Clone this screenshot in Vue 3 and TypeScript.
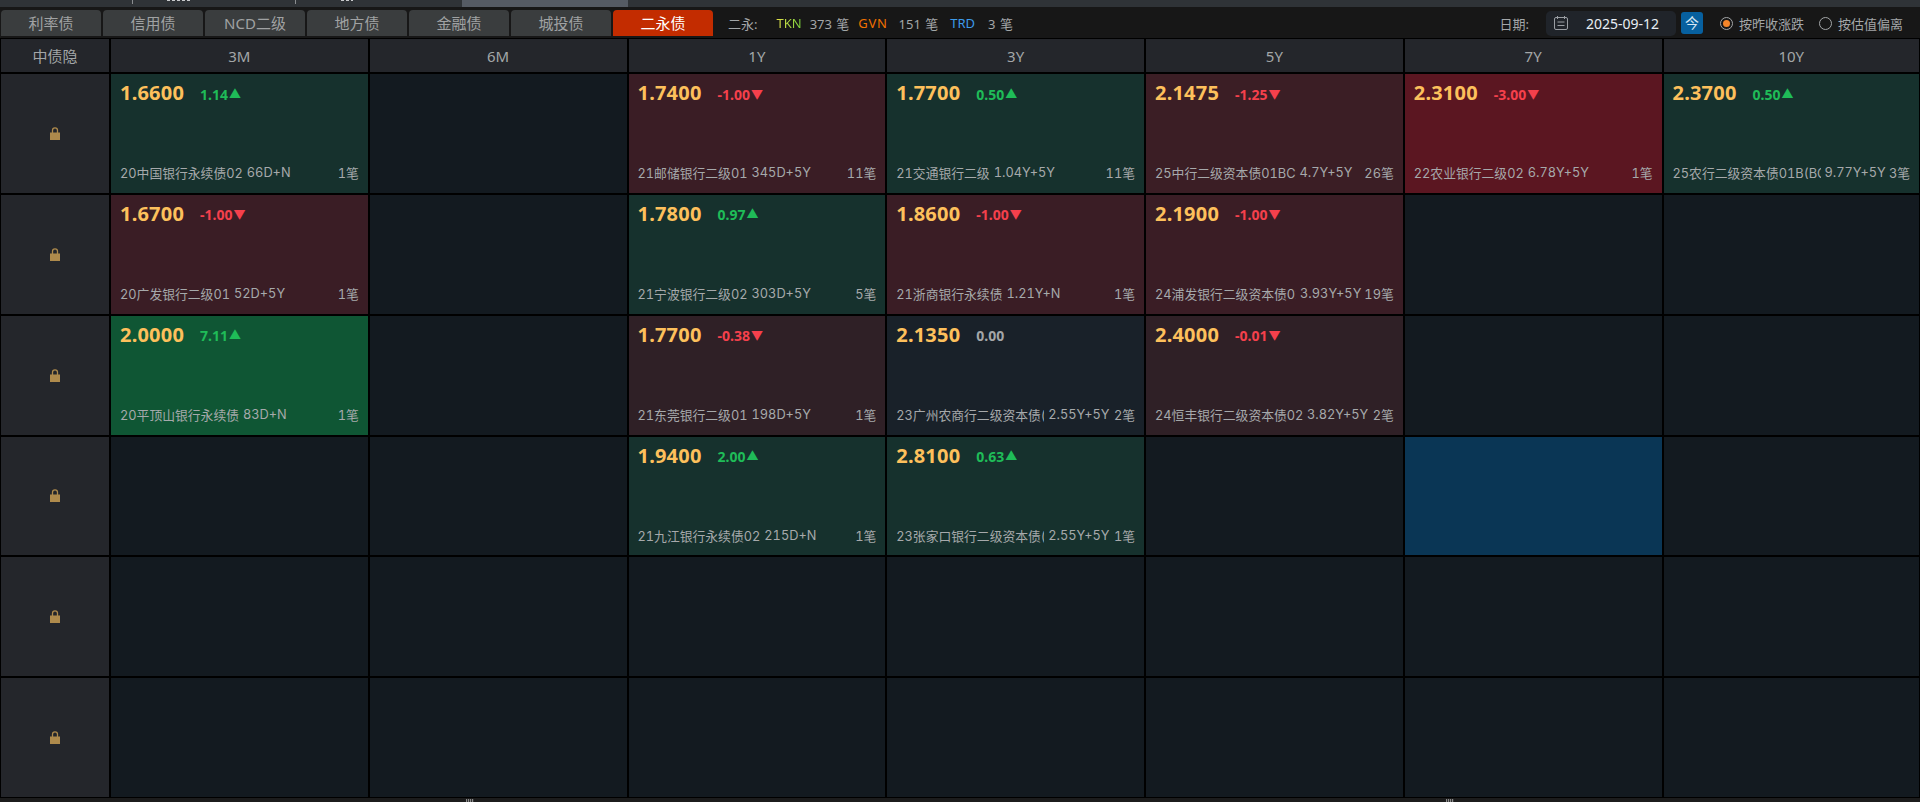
<script setup lang="ts">
type Cell = { v?: string; c?: string; dir?: 'up' | 'down' | 'flat'; name?: string; term?: string; n?: string; tone: string } | null

const tabs = ['利率债', '信用债', 'NCD二级', '地方债', '金融债', '城投债', '二永债']
const cols = ['3M', '6M', '1Y', '3Y', '5Y', '7Y', '10Y']

const e: Cell = null
const rows: Cell[][] = [
  [
    { v: '1.6600', c: '1.14', dir: 'up', name: '20中国银行永续债02', term: '66D+N', n: '1笔', tone: 'green' },
    e,
    { v: '1.7400', c: '-1.00', dir: 'down', name: '21邮储银行二级01', term: '345D+5Y', n: '11笔', tone: 'red' },
    { v: '1.7700', c: '0.50', dir: 'up', name: '21交通银行二级', term: '1.04Y+5Y', n: '11笔', tone: 'green' },
    { v: '2.1475', c: '-1.25', dir: 'down', name: '25中行二级资本债01BC', term: '4.7Y+5Y', n: '26笔', tone: 'red2' },
    { v: '2.3100', c: '-3.00', dir: 'down', name: '22农业银行二级02', term: '6.78Y+5Y', n: '1笔', tone: 'redStrong' },
    { v: '2.3700', c: '0.50', dir: 'up', name: '25农行二级资本债01B(BC)', term: '9.77Y+5Y', n: '3笔', tone: 'green' }
  ],
  [
    { v: '1.6700', c: '-1.00', dir: 'down', name: '20广发银行二级01', term: '52D+5Y', n: '1笔', tone: 'red' },
    e,
    { v: '1.7800', c: '0.97', dir: 'up', name: '21宁波银行二级02', term: '303D+5Y', n: '5笔', tone: 'green' },
    { v: '1.8600', c: '-1.00', dir: 'down', name: '21浙商银行永续债', term: '1.21Y+N', n: '1笔', tone: 'red' },
    { v: '2.1900', c: '-1.00', dir: 'down', name: '24浦发银行二级资本债02', term: '3.93Y+5Y', n: '19笔', tone: 'red' },
    e,
    e
  ],
  [
    { v: '2.0000', c: '7.11', dir: 'up', name: '20平顶山银行永续债', term: '83D+N', n: '1笔', tone: 'greenStrong' },
    e,
    { v: '1.7700', c: '-0.38', dir: 'down', name: '21东莞银行二级01', term: '198D+5Y', n: '1笔', tone: 'redSoft' },
    { v: '2.1350', c: '0.00', dir: 'flat', name: '23广州农商行二级资本债(BC)', term: '2.55Y+5Y', n: '2笔', tone: 'flat' },
    { v: '2.4000', c: '-0.01', dir: 'down', name: '24恒丰银行二级资本债02', term: '3.82Y+5Y', n: '2笔', tone: 'redSoft' },
    e,
    e
  ],
  [
    e,
    e,
    { v: '1.9400', c: '2.00', dir: 'up', name: '21九江银行永续债02', term: '215D+N', n: '1笔', tone: 'green' },
    { v: '2.8100', c: '0.63', dir: 'up', name: '23张家口银行二级资本债(BC)', term: '2.55Y+5Y', n: '1笔', tone: 'green' },
    e,
    { tone: 'blue' },
    e
  ],
  [e, e, e, e, e, e, e],
  [e, e, e, e, e, e, e]
]

const arrow = (d?: string) => (d === 'up' ? '▲' : d === 'down' ? '▼' : '')
</script>

<template>
  <div class="page">
    <div class="topstrip">
      <span class="seg seg-a"></span>
      <span class="frag frag-a"></span>
      <span class="seg seg-b"></span>
      <span class="frag frag-b"></span>
      <span class="thumb"></span>
    </div>
    <div class="toolbar">
      <div class="tabs">
        <div v-for="(t, i) in tabs" :key="t" class="tab" :class="{ active: i === 6 }">{{ t }}</div>
      </div>
      <div class="stats">
        <span class="lbl">二永:</span>
        <span class="tkn">TKN</span><span class="num n1">373 笔</span>
        <span class="gvn">GVN</span><span class="num n2">151 笔</span>
        <span class="trd">TRD</span><span class="num n3">3 笔</span>
      </div>
      <div class="right">
        <span class="lbl">日期:</span>
        <div class="date">
          <svg class="cal" width="14" height="14" viewBox="0 0 14 14" fill="none" stroke="#9a9ea3" stroke-width="1">
            <rect x="0.5" y="1.5" width="13" height="12" rx="1.5" />
            <path d="M3.5 0v3M10.5 0v3M3.5 6h7M3.5 9.5h7" />
          </svg>
          <span>2025-09-12</span>
        </div>
        <div class="today">今</div>
        <label class="radio"><i class="dot on"></i>按昨收涨跌</label>
        <label class="radio r2"><i class="dot"></i>按估值偏离</label>
      </div>
    </div>
    <div class="grid">
      <div class="head">中债隐</div>
      <div v-for="c in cols" :key="c" class="head">{{ c }}</div>
      <template v-for="(row, r) in rows" :key="r">
        <div class="lockcell">
          <svg width="10" height="13" viewBox="0 0 10 13">
            <path d="M2.5 6V3.2C2.5 1.6 3.5.8 5 .8s2.5.8 2.5 2.4V6" fill="none" stroke="#ae8a4c" stroke-width="1.3" />
            <rect x="0" y="5.5" width="10" height="7.5" fill="#ae8a4c" />
          </svg>
        </div>
        <div v-for="(cell, i) in row" :key="i" class="cell" :class="cell ? cell.tone : 'empty'">
          <template v-if="cell && cell.v">
            <div class="line1">
              <span class="val">{{ cell.v }}</span>
              <span class="chg" :class="cell.dir">{{ cell.c }}<small class="tri">{{ arrow(cell.dir) }}</small></span>
            </div>
            <div class="line2">
              <span class="name">{{ cell.name }}</span>
              <span class="term">{{ cell.term }}</span>
              <span class="count">{{ cell.n }}</span>
            </div>
          </template>
        </div>
      </template>
    </div>
    <div class="bottom">
      <span class="grip"></span>
      <span class="grip"></span>
    </div>
  </div>
</template>

<style>
html, body { margin: 0; background: #000; }
</style>

<style scoped>
.page {
  width: 1920px;
  height: 802px;
  display: flex;
  flex-direction: column;
  overflow: hidden;
  background: #000;
  font-family: "Noto Sans", "Noto Sans CJK SC", sans-serif;
  color: #a3a6a8;
}
.topstrip {
  height: 7px;
  flex: none;
  position: relative;
  background: #2f3337;
  overflow: hidden;
}
.seg { position: absolute; top: 0; width: 1px; height: 4px; background: #8a8d90; }
.seg-a { left: 132px; }
.seg-b { left: 295px; }
.frag { position: absolute; top: 0; height: 1px; background: repeating-linear-gradient(90deg, #c8cacc 0 3px, transparent 3px 5px); }
.frag-a { left: 167px; width: 25px; }
.frag-b { left: 341px; width: 12px; }
.thumb { position: absolute; left: 462px; top: 0; width: 166px; height: 7px; background: #555b64; }
.toolbar {
  height: 31px;
  flex: none;
  display: flex;
  align-items: flex-start;
  background: #171717;
  padding-top: 3px;
  box-sizing: border-box;
}
.tabs { display: flex; gap: 2px; width: 712px; flex: none; padding-left: 1px; box-sizing: border-box; }
.tab {
  width: 100px;
  flex: none;
  height: 26px;
  background: #3a3d3e;
  border-radius: 4px 4px 0 0;
  font-size: 15px;
  line-height: 27px;
  text-align: center;
  color: #a0a2a3;
}
.tab.active { background: #c32c00; color: #fff; }
.stats {
  display: flex;
  align-items: center;
  height: 26px;
  margin-left: 16px;
  font-size: 13px;
  color: #a3a6a8;
  white-space: nowrap;
}
.lbl { color: #a3a6a8; font-size: 13px; }
.tkn { margin-left: 19px; background: linear-gradient(90deg, #e6e04a, #76d23c); -webkit-background-clip: text; background-clip: text; color: transparent; }
.num { word-spacing: 1px; }
.n1 { margin-left: 8px; margin-right: 9px; }
.n2 { margin-left: 11px; margin-right: 12px; }
.n3 { margin-left: 13px; }
.gvn { color: #f07000; letter-spacing: 0.7px; }
.trd { color: #3d9be9; }
.right {
  margin-left: auto;
  display: flex;
  align-items: center;
  height: 26px;
  font-size: 13px;
  padding-right: 17px;
}
.date {
  display: flex;
  align-items: center;
  width: 130px;
  height: 25px;
  margin-left: 17px;
  box-sizing: border-box;
  padding-left: 8px;
  background: #20242a;
  border-radius: 5px;
  font-size: 14px;
  color: #e8eef4;
}
.cal { flex: none; margin-right: 18px; }
.today {
  width: 22px;
  height: 22px;
  margin-left: 5px;
  border-radius: 3px;
  background: #07609f;
  color: #d8e8f4;
  text-align: center;
  line-height: 22px;
  font-size: 14px;
}
.radio { display: flex; align-items: center; margin-left: 17px; color: #a3a6a8; font-size: 13px; }
.radio.r2 { margin-left: 15px; }
.dot {
  width: 11px;
  height: 11px;
  border: 1px solid #a3a6a8;
  border-radius: 50%;
  margin-right: 6px;
  position: relative;
  box-sizing: content-box;
}
.dot.on::after {
  content: "";
  position: absolute;
  inset: 2px;
  border-radius: 50%;
  background: #f5862a;
}
.grid {
  flex: none;
  margin: 1px 1px 0;
  height: 758px;
  display: grid;
  grid-template-columns: 108px repeat(6, 256.75px) 1fr;
  grid-template-rows: 33px repeat(6, 1fr);
  gap: 2px;
}
.head {
  background: #24262b;
  font-size: 15px;
  color: #a3a6a8;
  display: flex;
  align-items: center;
  justify-content: center;
}
.lockcell {
  background: #24262b;
  display: flex;
  align-items: center;
  justify-content: center;
}
.cell {
  min-width: 0;
  display: flex;
  flex-direction: column;
  justify-content: space-between;
  box-sizing: border-box;
  padding: 5px 9px 11px;
}
.empty { background: #131a20; }
.green { background: #16312d; }
.greenStrong { background: #0f5634; }
.red { background: #3a1d25; }
.red2 { background: #3b1e25; }
.redSoft { background: #2f2026; }
.redStrong { background: #5b1621; }
.flat { background: #192129; }
.blue { background: #0a3655; }
.line1 { display: flex; align-items: center; height: 27px; }
.val { font-size: 20px; font-weight: 700; color: #fdc05c; line-height: 27px; letter-spacing: 0.2px; }
.chg { margin-left: 16px; margin-top: 3px; font-size: 14px; font-weight: 700; line-height: 27px; display: inline-flex; align-items: center; }
.tri { font-size: 12px; margin-left: 1px; font-weight: 400; }
.chg.up { color: #1fbc58; }
.chg.down { color: #f5404c; }
.chg.flat { color: #a3a6a8; background: none; }
.line2 {
  display: flex;
  align-items: center;
  font-family: Inter, "Noto Sans CJK SC", sans-serif;
  font-variant-numeric: tabular-nums;
  font-size: 12.8px;
  color: #a6a9ab;
  white-space: nowrap;
  height: 18px;
}
.name { max-width: 148px; min-width: 0; overflow: hidden; flex: 0 1 auto; }
.term { margin-left: 4px; flex: none; }
.count { margin-left: auto; padding-left: 3px; flex: none; }
.bottom {
  flex: 1;
  background: #1c1c1c;
  margin-top: 1px;
  position: relative;
}
.grip {
  position: absolute;
  top: 1px;
  left: 466px;
  width: 8px;
  height: 3px;
  background: repeating-linear-gradient(90deg, #8a8a8a 0 1px, #333 1px 2px);
}
.grip + .grip { left: 1446px; }
</style>
